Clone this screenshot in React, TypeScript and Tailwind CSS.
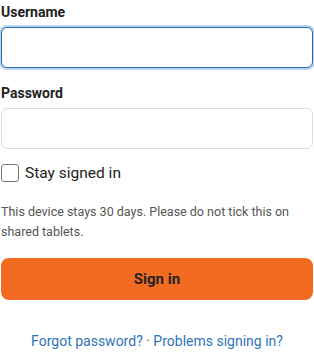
import React from "react";

export default function App() {
  return (
    <div
      className="w-[314px] h-[353px] bg-white text-[#222] overflow-hidden"
      style={{ fontFamily: "Roboto, 'Noto Sans', sans-serif" }}
    >
      <div className="px-px pt-[2px]">
        <label className="block text-[14px] font-bold leading-[20px] text-[#222]">Username</label>
        <input
          type="text"
          className="mt-[5px] block w-full h-[41px] rounded-[6px] border border-[#2b6cb0] ring-2 ring-[#b9d4ef] outline-none bg-white"
        />
        <label className="mt-[15px] block text-[14px] font-bold leading-[20px] text-[#222]">Password</label>
        <input
          type="password"
          className="mt-[5px] block w-full h-[41px] rounded-[6px] border border-[#dcdcdc] outline-none bg-white"
        />
        <div className="mt-[14px] flex items-center gap-[6px]">
          <span className="block w-[18px] h-[18px] rounded-[3px] border border-[#777] bg-white" />
          <span className="text-[15.5px] leading-[20px] text-[#222]">Stay signed in</span>
        </div>
        <p className="mt-[19px] text-[12.5px] leading-[20px] text-[#555]">
          This device stays 30 days. Please do not tick this on shared tablets.
        </p>
        <button className="mt-[16px] block w-full h-[42px] rounded-[8px] bg-[#f26b21] text-[15px] font-bold text-[#222]">
          Sign in
        </button>
        <div className="mt-[31px] text-center text-[14px] leading-[20px] text-[#2f74b9]">
          <a>Forgot password?</a>
          <span className="text-[#555]"> · </span>
          <a>Problems signing in?</a>
        </div>
      </div>
    </div>
  );
}
